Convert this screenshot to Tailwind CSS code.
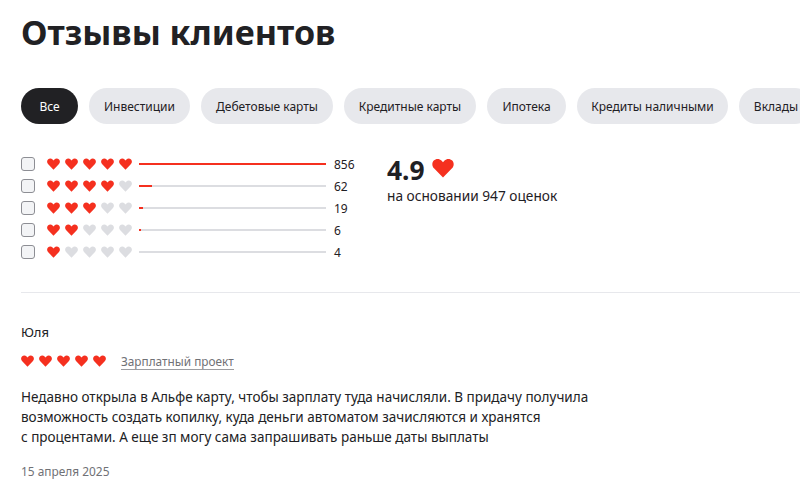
<!DOCTYPE html>
<html lang="ru">
<head>
<meta charset="utf-8">
<script src="https://cdn.jsdelivr.net/npm/@tailwindcss/browser@4"></script>
</head>
<body class="bg-white overflow-hidden font-['Noto_Sans',sans-serif] text-[#1f2024]">
<svg class="hidden"><defs><symbol id="h" viewBox="0 0 14 13"><path d="M7 12.6 1.300 6.900C-.300 5.300-.300 3 1 1.700 2.400.300 4.700.300 6 1.700l1 1 1-1c1.300-1.400 3.600-1.400 5 0 1.300 1.300 1.300 3.600-.300 5.200z"/></symbol></defs></svg>
<div class="h-[493px] w-[800px] overflow-hidden pl-[21px]">
  <h1 class="pt-[9px] h-[88px] text-[34.100px] leading-[46px] font-bold text-[#212124]">Отзывы клиентов</h1>
  <div class="flex gap-[11px] w-[900px] text-[12px]">
    <div class="h-9 pt-px w-[57px] rounded-full bg-[#212124] text-white flex items-center justify-center">Все</div>
    <div class="h-9 pt-px w-[101px] rounded-full bg-[#e7e8ec] flex items-center justify-center">Инвестиции</div>
    <div class="h-9 pt-px w-[132px] rounded-full bg-[#e7e8ec] flex items-center justify-center">Дебетовые карты</div>
    <div class="h-9 pt-px w-[132px] rounded-full bg-[#e7e8ec] flex items-center justify-center">Кредитные карты</div>
    <div class="h-9 pt-px w-[79px] rounded-full bg-[#e7e8ec] flex items-center justify-center">Ипотека</div>
    <div class="h-9 pt-px w-[151px] rounded-full bg-[#e7e8ec] flex items-center justify-center">Кредиты наличными</div>
    <div class="h-9 pt-px w-[74px] rounded-full bg-[#e7e8ec] flex items-center justify-center">Вклады</div>
  </div>
  <div class="flex mt-[29px] h-[140px] border-b border-[#e7e8ec] w-[779px]">
    <div class="flex flex-col w-[366px] text-[13px]">
      <div class="flex items-center h-[22px]">
        <span class="w-[14px] h-[14px] rounded-[3px] border border-[#8d8e94] bg-[#f3f4f6]"></span>
        <span class="flex gap-[5px] ml-3 mr-[7px] text-[#f5301f]"><svg class="w-[13px] h-3 fill-current"><use href="#h"/></svg><svg class="w-[13px] h-3 fill-current"><use href="#h"/></svg><svg class="w-[13px] h-3 fill-current"><use href="#h"/></svg><svg class="w-[13px] h-3 fill-current"><use href="#h"/></svg><svg class="w-[13px] h-3 fill-current"><use href="#h"/></svg></span>
        <span class="w-[187px] h-[2px] bg-[#dcdde1] flex"><span class="h-full w-[187px] bg-[#f5301f]"></span></span>
        <span class="ml-2 pt-px text-[12px]">856</span>
      </div>
      <div class="flex items-center h-[22px]">
        <span class="w-[14px] h-[14px] rounded-[3px] border border-[#8d8e94] bg-[#f3f4f6]"></span>
        <span class="flex gap-[5px] ml-3 mr-[7px] text-[#f5301f]"><svg class="w-[13px] h-3 fill-current"><use href="#h"/></svg><svg class="w-[13px] h-3 fill-current"><use href="#h"/></svg><svg class="w-[13px] h-3 fill-current"><use href="#h"/></svg><svg class="w-[13px] h-3 fill-current"><use href="#h"/></svg><svg class="w-[13px] h-3 fill-[#dcdde1]"><use href="#h"/></svg></span>
        <span class="w-[187px] h-[2px] bg-[#dcdde1] flex"><span class="h-full w-[13px] bg-[#f5301f]"></span></span>
        <span class="ml-2 pt-px text-[12px]">62</span>
      </div>
      <div class="flex items-center h-[22px]">
        <span class="w-[14px] h-[14px] rounded-[3px] border border-[#8d8e94] bg-[#f3f4f6]"></span>
        <span class="flex gap-[5px] ml-3 mr-[7px] text-[#f5301f]"><svg class="w-[13px] h-3 fill-current"><use href="#h"/></svg><svg class="w-[13px] h-3 fill-current"><use href="#h"/></svg><svg class="w-[13px] h-3 fill-current"><use href="#h"/></svg><svg class="w-[13px] h-3 fill-[#dcdde1]"><use href="#h"/></svg><svg class="w-[13px] h-3 fill-[#dcdde1]"><use href="#h"/></svg></span>
        <span class="w-[187px] h-[2px] bg-[#dcdde1] flex"><span class="h-full w-1 bg-[#f5301f]"></span></span>
        <span class="ml-2 pt-px text-[12px]">19</span>
      </div>
      <div class="flex items-center h-[22px]">
        <span class="w-[14px] h-[14px] rounded-[3px] border border-[#8d8e94] bg-[#f3f4f6]"></span>
        <span class="flex gap-[5px] ml-3 mr-[7px] text-[#f5301f]"><svg class="w-[13px] h-3 fill-current"><use href="#h"/></svg><svg class="w-[13px] h-3 fill-current"><use href="#h"/></svg><svg class="w-[13px] h-3 fill-[#dcdde1]"><use href="#h"/></svg><svg class="w-[13px] h-3 fill-[#dcdde1]"><use href="#h"/></svg><svg class="w-[13px] h-3 fill-[#dcdde1]"><use href="#h"/></svg></span>
        <span class="w-[187px] h-[2px] bg-[#dcdde1] flex"><span class="h-full w-[2px] bg-[#f5301f]"></span></span>
        <span class="ml-2 pt-px text-[12px]">6</span>
      </div>
      <div class="flex items-center h-[22px]">
        <span class="w-[14px] h-[14px] rounded-[3px] border border-[#8d8e94] bg-[#f3f4f6]"></span>
        <span class="flex gap-[5px] ml-3 mr-[7px] text-[#f5301f]"><svg class="w-[13px] h-3 fill-current"><use href="#h"/></svg><svg class="w-[13px] h-3 fill-[#dcdde1]"><use href="#h"/></svg><svg class="w-[13px] h-3 fill-[#dcdde1]"><use href="#h"/></svg><svg class="w-[13px] h-3 fill-[#dcdde1]"><use href="#h"/></svg><svg class="w-[13px] h-3 fill-[#dcdde1]"><use href="#h"/></svg></span>
        <span class="w-[187px] h-[2px] bg-[#dcdde1]"></span>
        <span class="ml-2 pt-px text-[12px]">4</span>
      </div>
    </div>
    <div class="flex flex-col">
      <div class="flex items-start gap-2 h-[33px] pt-px">
        <span class="text-[26.400px] leading-[33px] font-bold">4.9</span>
        <svg class="w-[22px] h-5 fill-[#f5301f] mt-[4px] -ml-px"><use href="#h"/></svg>
      </div>
      <div class="text-[13.700px] leading-[20px]">на основании 947 оценок</div>
    </div>
  </div>
  <div class="mt-[29px] text-[13px] leading-5 text-[#212124]">Юля</div>
  <div class="flex items-center mt-[9px] h-5">
    <span class="flex gap-[5px] mr-[15px]"><svg class="w-[13px] h-3 fill-[#f5301f]"><use href="#h"/></svg><svg class="w-[13px] h-3 fill-[#f5301f]"><use href="#h"/></svg><svg class="w-[13px] h-3 fill-[#f5301f]"><use href="#h"/></svg><svg class="w-[13px] h-3 fill-[#f5301f]"><use href="#h"/></svg><svg class="w-[13px] h-3 fill-[#f5301f]"><use href="#h"/></svg></span>
    <span class="text-[11.800px] leading-4 text-[#707176] border-b border-[#9c9da1]">Зарплатный проект</span>
  </div>
  <p class="mt-[16px] text-[13.500px] leading-[20px] w-[620px] text-[#212124]">Недавно открыла в Альфе карту, чтобы зарплату туда начисляли. В придачу получила<br>возможность создать копилку, куда деньги автоматом зачисляются и хранятся<br>с процентами. А еще зп могу сама запрашивать раньше даты выплаты</p>
  <div class="mt-[16px] text-[11.900px] leading-4 text-[#707176]">15 апреля 2025</div>
</div>
</body>
</html>
